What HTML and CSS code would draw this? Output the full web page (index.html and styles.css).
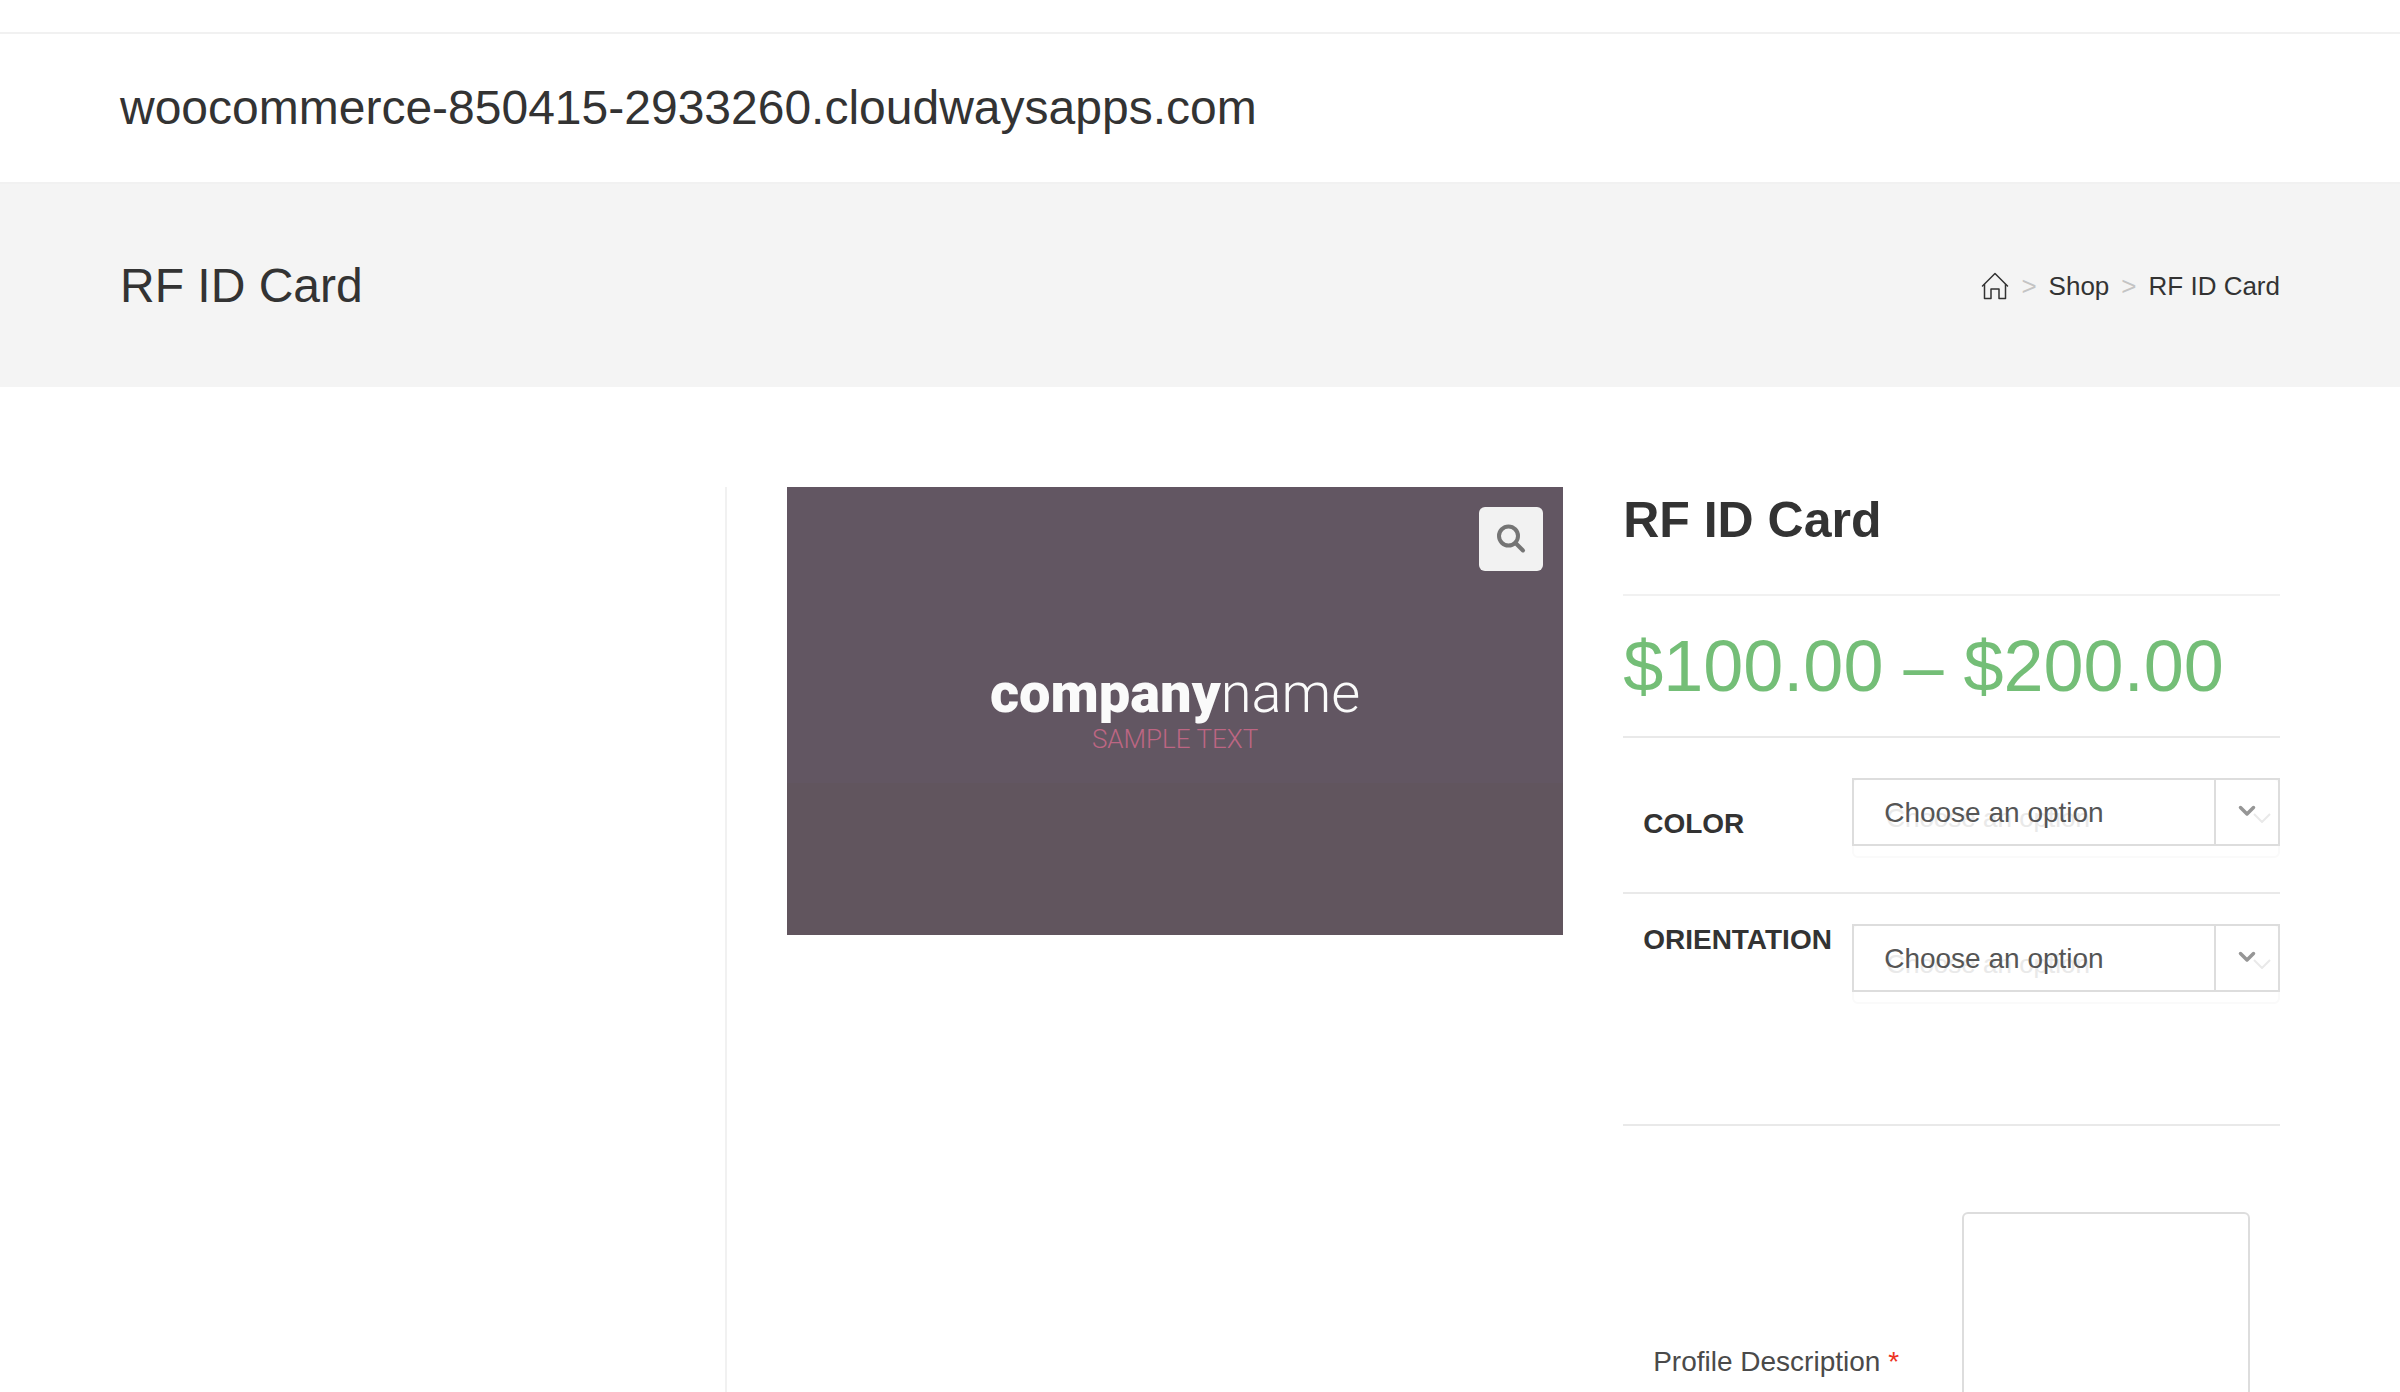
FILE: index.html
```html
<!DOCTYPE html>
<html lang="en">
<head>
<meta charset="utf-8">
<meta name="viewport" content="width=device-width, initial-scale=1">
<title>RF ID Card</title>
<link rel="stylesheet" href="styles.css">
</head>
<body>
<div class="top-bar"></div>
<header class="site-header">
  <a class="site-logo" href="#">woocommerce-850415-2933260.cloudwaysapps.com</a>
</header>
<section class="page-header">
  <h1 class="page-title">RF ID Card</h1>
  <nav class="breadcrumb" aria-label="Breadcrumb">
    <a class="home" href="#" aria-label="Home">
      <svg width="28" height="28" viewBox="0 0 28 28" fill="none" stroke="currentColor" stroke-width="1.5" stroke-linecap="round" stroke-linejoin="round">
        <path d="M1.5 14 14 1.5 26.500 14"/>
        <path d="M3.500 12.500V26.500H10V17H18V26.500H24.500V12.500"/>
      </svg>
    </a>
    <span class="sep">&gt;</span>
    <a href="#">Shop</a>
    <span class="sep">&gt;</span>
    <a href="#">RF ID Card</a>
  </nav>
</section>
<div class="content">
  <aside class="sidebar"></aside>
  <main class="product">
    <div class="gallery">
      <div class="card-art">
        <div class="card-name"><b>company</b>name</div>
        <div class="card-tag">SAMPLE TEXT</div>
      </div>
      <button class="zoom-button" type="button" aria-label="View full image">
        <svg width="30" height="30" viewBox="0 0 30 30" fill="none" stroke="currentColor" stroke-width="4" stroke-linecap="round">
          <circle cx="12.500" cy="12" r="9.500"/>
          <path d="M19.500 19 27 26.500"/>
        </svg>
      </button>
    </div>
    <div class="summary">
      <h2 class="product-title">RF ID Card</h2>
      <p class="price">$100.00 – $200.00</p>
      <form>
        <div class="option-row option-row-color">
          <label class="option-label" for="color">COLOR</label>
          <div class="select-box">
            <div class="select-shadow" aria-hidden="true">
              <span>Choose an option</span>
              <svg width="18" height="10" viewBox="0 0 18 10" fill="none" stroke="currentColor" stroke-width="2"><path d="M1 1 9 9 17 1"/></svg>
            </div>
            <select id="color"><option>Choose an option</option></select>
            <span class="select-arrow"><svg width="18" height="12" viewBox="0 0 18 12" fill="none" stroke="currentColor" stroke-width="3.500" stroke-linecap="round" stroke-linejoin="round"><path d="M2.500 2.500 9 9 15.500 2.500"/></svg></span>
          </div>
        </div>
        <div class="option-row option-row-orientation">
          <label class="option-label" for="orientation">ORIENTATION</label>
          <div class="select-box">
            <div class="select-shadow" aria-hidden="true">
              <span>Choose an option</span>
              <svg width="18" height="10" viewBox="0 0 18 10" fill="none" stroke="currentColor" stroke-width="2"><path d="M1 1 9 9 17 1"/></svg>
            </div>
            <select id="orientation"><option>Choose an option</option></select>
            <span class="select-arrow"><svg width="18" height="12" viewBox="0 0 18 12" fill="none" stroke="currentColor" stroke-width="3.500" stroke-linecap="round" stroke-linejoin="round"><path d="M2.500 2.500 9 9 15.500 2.500"/></svg></span>
          </div>
        </div>
        <div class="addon-row">
          <label for="profile">Profile Description <span class="required">*</span></label>
          <textarea id="profile" required></textarea>
        </div>
      </form>
    </div>
  </main>
</div>
</body>
</html>
```

FILE: styles.css
```css
* {
  box-sizing: border-box;
}

body {
  margin: 0;
  min-height: 100vh;
  display: flex;
  flex-direction: column;
  background: #fff;
  color: #4a4a4a;
  font-family: "Liberation Sans", Arial, sans-serif;
  font-size: 28px;
  line-height: 32px;
}

a {
  color: #333;
  text-decoration: none;
}

h1, h2, p {
  margin: 0;
}

svg {
  display: block;
}

.top-bar {
  height: 34px;
  border-bottom: 2px solid #f1f1f1;
}

.site-header {
  padding: 46px 5%;
  border-bottom: 2px solid #f1f1f1;
}

.site-logo {
  display: block;
  font-size: 48px;
  line-height: 56px;
}

.page-header {
  display: flex;
  align-items: center;
  justify-content: space-between;
  padding: 74px 5% 73px;
  background: #f4f4f4;
}

.page-title {
  color: #333;
  font-size: 48px;
  font-weight: 400;
  line-height: 56px;
}

.breadcrumb {
  display: flex;
  align-items: center;
  gap: 12px;
  font-size: 26px;
}

.breadcrumb .sep {
  color: #c4c4c4;
}

.content {
  flex: 1;
  display: flex;
  gap: 60px;
  padding: 100px 5% 0;
}

.sidebar {
  flex: 0 0 28.1%;
  border-right: 2px solid #f1f1f1;
}

.product {
  flex: 1;
  display: grid;
  grid-template-columns: 52fr 44fr;
  gap: 60px;
  align-items: start;
}

.gallery {
  position: relative;
}

.card-art {
  display: flex;
  flex-direction: column;
  align-items: center;
  justify-content: center;
  aspect-ratio: 776 / 448;
  padding-bottom: 4px;
  background: linear-gradient(#625662 66%, #61555e 66%);
  color: #fafafa;
  font-family: Roboto, sans-serif;
  font-weight: 300;
}

.card-name {
  font-size: 56px;
  line-height: 60px;
}

.card-name b {
  font-weight: 900;
}

.card-tag {
  color: #bd6683;
  font-size: 26px;
}

.zoom-button {
  position: absolute;
  top: 20px;
  right: 20px;
  display: flex;
  align-items: center;
  justify-content: center;
  width: 64px;
  height: 64px;
  padding: 0;
  border: 0;
  border-radius: 6px;
  background: #f2f2f2;
  color: #757575;
}

.product-title {
  padding-bottom: 41px;
  border-bottom: 2px solid #f1f1f1;
  color: #333;
  font-size: 50px;
  line-height: 66px;
}

.price {
  border-bottom: 2px solid #e9e9e9;
  color: #74be77;
  font-size: 72px;
  line-height: 140px;
}

.option-row {
  display: grid;
  grid-template-columns: 209px 1fr;
  align-items: start;
  padding-left: 20px;
  border-bottom: 2px solid #e9e9e9;
}

.option-row-color {
  padding-top: 40px;
  padding-bottom: 46px;
}

.option-row-color .option-label {
  padding-top: 30px;
}

.option-row-orientation {
  padding-top: 30px;
  padding-bottom: 132px;
}

.option-label {
  color: #333;
  font-weight: 700;
}

.select-box {
  position: relative;
}

.select-box select {
  position: relative;
  display: block;
  width: 100%;
  height: 68px;
  padding: 2px 80px 0 30px;
  border: 2px solid #ddd;
  border-radius: 0;
  background: transparent;
  color: #555;
  font: inherit;
  appearance: none;
}

.select-arrow {
  position: absolute;
  top: 0;
  right: 0;
  display: flex;
  align-items: center;
  justify-content: center;
  width: 66px;
  height: 68px;
  padding: 0 2px 2px 0;
  border-left: 2px solid #ddd;
  color: #969696;
  pointer-events: none;
}

.select-shadow {
  position: absolute;
  inset: 0 0 -12px;
  display: flex;
  align-items: center;
  justify-content: space-between;
  padding: 0 7px 0 32px;
  border: 2px solid #fafafa;
  border-radius: 6px;
  color: #e9e9e9;
  font-size: 26px;
}

.addon-row {
  display: flex;
  align-items: center;
  justify-content: space-between;
  padding: 86px 30px 0;
}

.addon-row textarea {
  width: 288px;
  height: 300px;
  border: 2px solid #ddd;
  border-radius: 6px;
  background: #fff;
  font: inherit;
  resize: none;
}

.required {
  color: #e32;
}
```
